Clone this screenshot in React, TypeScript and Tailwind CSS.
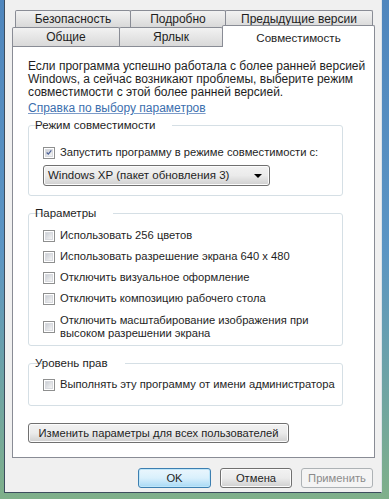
import React from "react";

const font = { fontFamily: '"Liberation Sans", Arial, sans-serif' };

function Box({ checked = false }: { checked?: boolean }) {
  return (
    <div className="w-[12px] h-[12px] shrink-0 border border-[#8e8f8f] bg-white p-[1px]">
      <div className="w-full h-full bg-gradient-to-br from-[#cbcfd5] to-[#f4f4f4] border border-[#d8dadf] flex items-center justify-center">
        {checked && (
          <svg width="9" height="9" viewBox="0 0 9 9">
            <path d="M1 4.5 L3.5 7 L8 1.2" stroke="#4a5f97" strokeWidth="1.8" fill="none" />
          </svg>
        )}
      </div>
    </div>
  );
}

function Row({ children, checked = false }: { children: React.ReactNode; checked?: boolean }) {
  return (
    <div className="flex items-center gap-[5px] leading-[13px] whitespace-nowrap text-[11.2px]">
      <Box checked={checked} />
      <div>{children}</div>
    </div>
  );
}

function Tab({ w, label, h = "h-[17px]" }: { w: string; label: string; h?: string }) {
  return (
    <div
      className={`${w} ${h} -ml-px first:ml-0 border border-b-0 border-[#898c95] bg-gradient-to-b from-[#f2f2f2] to-[#d9d9d9] flex items-center justify-center text-[#1e1e1e] rounded-t-[2px]`}
    >
      {label}
    </div>
  );
}

function Btn({ w, label, kind = "normal" }: { w: string; label: string; kind?: "normal" | "default" | "disabled" }) {
  const cls =
    kind === "default"
      ? "border-[#3c7fb1] bg-gradient-to-b from-[#eaf6fd] via-[#d9f0fc] to-[#a7d9f5] shadow-[inset_0_0_0_1px_#bfe6f9] text-[#1e1e1e]"
      : kind === "disabled"
      ? "border-[#adb2b5] bg-[#f4f4f4] text-[#8b8b8b]"
      : "border-[#707070] bg-gradient-to-b from-[#f2f2f2] via-[#ebebeb] to-[#cfcfcf] shadow-[inset_0_0_0_1px_#fcfcfc] text-[#1e1e1e]";
  return (
    <div className={`${w} h-[20px] rounded-[3px] border flex items-center justify-center whitespace-nowrap text-[11.2px] ${cls}`}>{label}</div>
  );
}

export default function App() {
  return (
    <div
      className="w-[389px] h-[499px] overflow-hidden bg-[linear-gradient(180deg,#4f86bd_0%,#5b95c4_50%,#7fb08a_100%)] text-[12px] text-[#1e1e1e]"
      style={font}
    >
      <div className="ml-[4px] w-[378px] h-[493px] bg-[#f0f0f0] border-l border-b border-r border-l-[#3d4d5e] border-b-[#3d4d5e] border-r-[#dde4ea] flex flex-col">
        {/* tabs */}
        <div className="pl-[7px] pt-[10px]">
          <div className="flex ml-[3px]">
            <Tab w="w-[116px]" label="Безопасность" />
            <Tab w="w-[96px]" label="Подробно" />
            <Tab w="w-[148px]" label="Предыдущие версии" />
          </div>
          <div className="flex items-end h-[19px]">
            <Tab w="w-[108px]" label="Общие" h="h-[19px]" />
            <Tab w="w-[104px]" label="Ярлык" h="h-[19px]" />
            <div className="relative -ml-px w-[153px] h-[22px] -mb-px border border-b-0 border-[#898c95] bg-white flex items-start pt-[3px] justify-center rounded-t-[2px] z-10 text-[11.6px]">
              Совместимость
            </div>
          </div>
        </div>
        {/* panel */}
        <div className="ml-[7px] w-[363px] h-[412px] border border-[#898c95] bg-white pl-[15px] pt-[13px]">
          <div className="leading-[13px] whitespace-nowrap">
            Если программа успешно работала с более ранней версией
            <br />
            Windows, а сейчас возникают проблемы, выберите режим
            <br />
            совместимости с этой более ранней версией.
          </div>
          <div className="mt-[3px] leading-[13px] text-[#3c6fae] underline decoration-[#7d9cc9]">Справка по выбору параметров</div>

          <fieldset className="mt-[4px] w-[315px] min-w-0 border border-[#d5dfe5] rounded-[3px] pl-[14px] pb-[9px]">
            <legend className="ml-[3px] px-[3px] leading-[13px] -translate-x-[14px] text-[11.5px]">Режим совместимости</legend>
            <div className="mt-[14px]">
              <Row checked>Запустить программу в режиме совместимости с:</Row>
            </div>
            <div className="mt-[6px] w-[227px] h-[21px] rounded-[3px] border border-[#707070] bg-gradient-to-b from-[#f2f2f2] via-[#ebebeb] to-[#cfcfcf] shadow-[inset_0_0_0_1px_#fcfcfc] flex items-center justify-between pl-[4px] pr-[7px] text-[11.5px]">
              <span>Windows XP (пакет обновления 3)</span>
              <svg width="8" height="4" viewBox="0 0 8 4">
                <path d="M0 0 H8 L4 4 Z" fill="#000" />
              </svg>
            </div>
          </fieldset>

          <fieldset className="mt-[11px] w-[315px] min-w-0 border border-[#d5dfe5] rounded-[3px] pl-[14px] pb-[5px]">
            <legend className="ml-[3px] px-[3px] leading-[13px] -translate-x-[14px] text-[11.5px]">Параметры</legend>
            <div className="mt-[9px] flex flex-col gap-[8px]">
              <Row>Использовать 256 цветов</Row>
              <Row>Использовать разрешение экрана 640 x 480</Row>
              <Row>Отключить визуальное оформление</Row>
              <Row>Отключить композицию рабочего стола</Row>
              <div className="mt-[1px]">
                <Row>
                  Отключить масштабирование изображения при
                  <br />
                  высоком разрешении экрана
                </Row>
              </div>
            </div>
          </fieldset>

          <fieldset className="mt-[11px] w-[315px] min-w-0 border border-[#d5dfe5] rounded-[3px] pl-[14px] pb-[14px]">
            <legend className="ml-[3px] px-[3px] leading-[13px] -translate-x-[14px] text-[11.5px]">Уровень прав</legend>
            <div className="mt-[8px]">
              <Row>Выполнять эту программу от имени администратора</Row>
            </div>
          </fieldset>

          <div className="mt-[17px]">
            <Btn w="w-[261px]" label="Изменить параметры для всех пользователей" />
          </div>
        </div>
        {/* bottom buttons */}
        <div className="mt-[10px] flex justify-end gap-[9px] pr-[8px]">
          <Btn w="w-[73px]" label="OK" kind="default" />
          <Btn w="w-[72px]" label="Отмена" />
          <Btn w="w-[72px]" label="Применить" kind="disabled" />
        </div>
      </div>
    </div>
  );
}
